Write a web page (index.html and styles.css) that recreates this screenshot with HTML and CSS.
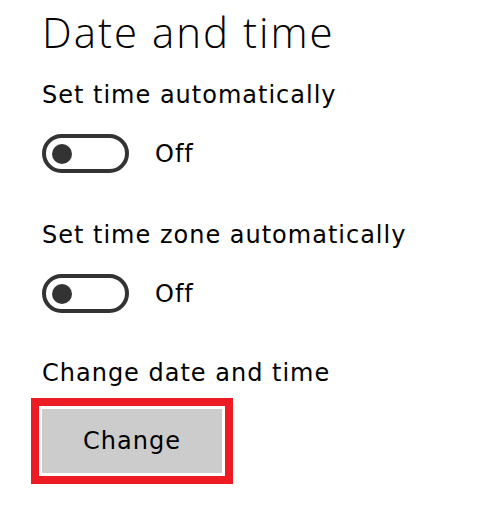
FILE: index.html
```html
<!DOCTYPE html>
<html lang="en">
<head>
<meta charset="utf-8">
<title>Date and time</title>
<link rel="stylesheet" href="styles.css">
</head>
<body>
<main class="page">
  <h1 class="title">Date and time</h1>

  <section class="setting">
    <div class="label">Set time automatically</div>
    <div class="toggle-row">
      <span class="toggle"><span class="knob"></span></span>
      <span class="state">Off</span>
    </div>
  </section>

  <section class="setting">
    <div class="label">Set time zone automatically</div>
    <div class="toggle-row">
      <span class="toggle"><span class="knob"></span></span>
      <span class="state">Off</span>
    </div>
  </section>

  <section class="setting">
    <div class="label">Change date and time</div>
    <div class="highlight">
      <div class="change-btn" role="button">Change</div>
    </div>
  </section>
</main>
</body>
</html>
```

FILE: styles.css
```css
* { box-sizing: border-box; }

html, body {
  margin: 0;
  background: #ffffff;
}

body {
  font-family: "DejaVu Sans", "Open Sans", "Liberation Sans", sans-serif;
  color: #000000;
}

.page {
  display: flex;
  flex-direction: column;
  align-items: flex-start;
  padding: 7px 0 0 42px;
}

.title {
  margin: 0;
  font-family: "Open Sans", "Noto Sans", sans-serif;
  font-size: 42px;
  line-height: 50px;
  font-weight: 300;
  letter-spacing: 2px;
}

.setting {
  display: flex;
  flex-direction: column;
  align-items: flex-start;
  margin-top: 22px;
}

.setting + .setting {
  margin-top: 46px;
}

.setting:last-child {
  margin-top: 44px;
}

.label {
  font-size: 24px;
  line-height: 32px;
  letter-spacing: 1px;
}

.toggle-row {
  display: flex;
  align-items: center;
  gap: 26px;
  margin-top: 23px;
}

.toggle {
  display: flex;
  align-items: center;
  width: 87px;
  height: 39px;
  border: 4px solid #333333;
  border-radius: 20px;
  padding-left: 6px;
}

.knob {
  width: 20px;
  height: 20px;
  border-radius: 50%;
  background: #333333;
}

.state {
  font-size: 24px;
  line-height: 32px;
  letter-spacing: 1px;
}

.highlight {
  margin: 9px 0 0 -11px;
  border: 8px solid #ed1c24;
  padding: 3px;
  background: #ffffff;
}

.change-btn {
  display: flex;
  align-items: center;
  justify-content: center;
  width: 180px;
  height: 64px;
  background: #cccccc;
  font-size: 24px;
  letter-spacing: 1px;
  color: #000000;
}
```
